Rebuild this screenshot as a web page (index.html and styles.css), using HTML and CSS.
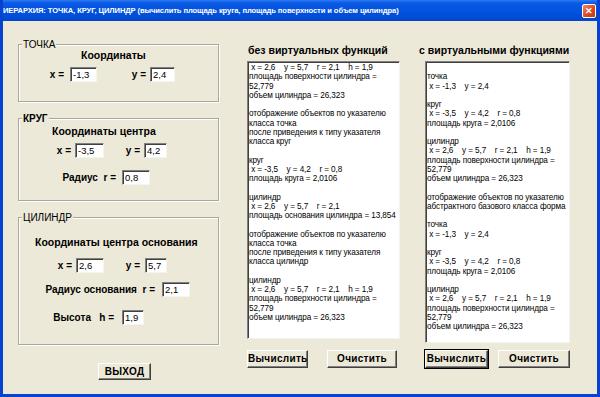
FILE: index.html
```html
<!DOCTYPE html>
<html lang="ru">
<head>
    <meta charset="UTF-8">
    <title>Иерархия</title>
    <link rel="stylesheet" href="styles.css">
</head>
<body>
    <div class="window">
        <div class="titlebar">
            <span class="title">ИЕРАРХИЯ: ТОЧКА, КРУГ, ЦИЛИНДР (вычислить площадь круга, площадь поверхности и объем цилиндра)</span>
            <span class="close">&#x2715;</span>
        </div>

        <div class="client">
            <div class="left">
                <div class="group g-point">
                    <div class="caption">ТОЧКА</div>
                    <div class="subhead sh-point">Координаты</div>
                    <div class="row r-point">
                        <span class="lbl l1">x =</span><span class="field f1">-1,3</span>
                        <span class="lbl l2">y =</span><span class="field f2">2,4</span>
                    </div>
                </div>

                <div class="group g-circle">
                    <div class="caption">КРУГ</div>
                    <div class="subhead sh-circle">Координаты центра</div>
                    <div class="row r-circle">
                        <span class="lbl l1">x =</span><span class="field f1">-3,5</span>
                        <span class="lbl l2">y =</span><span class="field f2">4,2</span>
                    </div>
                    <div class="row r-radius">
                        <span class="lbl l1">Радиус&nbsp; r =</span><span class="field f1">0,8</span>
                    </div>
                </div>

                <div class="group g-cyl">
                    <div class="caption">ЦИЛИНДР</div>
                    <div class="subhead sh-cyl">Координаты центра основания</div>
                    <div class="row r-cyl">
                        <span class="lbl l1">x =</span><span class="field f1">2,6</span>
                        <span class="lbl l2">y =</span><span class="field f2">5,7</span>
                    </div>
                    <div class="row r-base">
                        <span class="lbl l1">Радиус основания&nbsp; r =</span><span class="field f1">2,1</span>
                    </div>
                    <div class="row r-height">
                        <span class="lbl l1">Высота&nbsp;&nbsp; h =</span><span class="field f1">1,9</span>
                    </div>
                </div>

                <button class="btn exit">ВЫХОД</button>
            </div>

            <div class="col col-plain">
                <div class="heading">без виртуальных функций</div>
                <div class="memo">
                    <div> x = 2,6    y = 5,7    r = 2,1    h = 1,9</div>
                    <div>площадь поверхности цилиндра =</div>
                    <div>52,779</div>
                    <div>объем цилиндра = 26,323</div>
                    <div> </div>
                    <div>отображение объектов по указателю</div>
                    <div>класса точка</div>
                    <div>после приведения к типу указателя</div>
                    <div>класса круг</div>
                    <div> </div>
                    <div>круг</div>
                    <div> x = -3,5    y = 4,2    r = 0,8</div>
                    <div>площадь круга = 2,0106</div>
                    <div> </div>
                    <div>цилиндр</div>
                    <div> x = 2,6    y = 5,7    r = 2,1</div>
                    <div>площадь основания цилиндра = 13,854</div>
                    <div> </div>
                    <div>отображение объектов по указателю</div>
                    <div>класса точка</div>
                    <div>после приведения к типу указателя</div>
                    <div>класса цилиндр</div>
                    <div> </div>
                    <div>цилиндр</div>
                    <div> x = 2,6    y = 5,7    r = 2,1    h = 1,9</div>
                    <div>площадь поверхности цилиндра =</div>
                    <div>52,779</div>
                    <div>объем цилиндра = 26,323</div>
                </div>
                <div class="buttons">
                    <button class="btn calc">Вычислить</button>
                    <button class="btn clear">Очистить</button>
                </div>
            </div>

            <div class="col col-virtual">
                <div class="heading">с виртуальными функциями</div>
                <div class="memo">
                    <div> </div>
                    <div>точка</div>
                    <div> x = -1,3    y = 2,4</div>
                    <div> </div>
                    <div>круг</div>
                    <div> x = -3,5    y = 4,2    r = 0,8</div>
                    <div>площадь круга = 2,0106</div>
                    <div> </div>
                    <div>цилиндр</div>
                    <div> x = 2,6    y = 5,7    r = 2,1    h = 1,9</div>
                    <div>площадь поверхности цилиндра =</div>
                    <div>52,779</div>
                    <div>объем цилиндра = 26,323</div>
                    <div> </div>
                    <div>отображение объектов по указателю</div>
                    <div>абстрактного базового класса форма</div>
                    <div> </div>
                    <div>точка</div>
                    <div> x = -1,3    y = 2,4</div>
                    <div> </div>
                    <div>круг</div>
                    <div> x = -3,5    y = 4,2    r = 0,8</div>
                    <div>площадь круга = 2,0106</div>
                    <div> </div>
                    <div>цилиндр</div>
                    <div> x = 2,6    y = 5,7    r = 2,1    h = 1,9</div>
                    <div>площадь поверхности цилиндра =</div>
                    <div>52,779</div>
                    <div>объем цилиндра = 26,323</div>
                </div>
                <div class="buttons">
                    <button class="btn calc default">Вычислить</button>
                    <button class="btn clear">Очистить</button>
                </div>
            </div>
        </div>
    </div>
</body>
</html>
```

FILE: styles.css
```css
body {
    margin: 0;
    padding: 0;
    font-family: "Liberation Sans", Arial, sans-serif;
    background: #ece9d8;
}
.window {
    width: 600px;
    height: 397px;
    box-sizing: border-box;
    border: 3px solid #0843d0;
    border-top: none;
    background: #ece9d8;
    overflow: hidden;
}
.titlebar {
    display: flex;
    align-items: center;
    height: 21px;
    margin: 0 -3px;
    padding: 0 4px 0 3px;
    background: linear-gradient(#2f7bf2 0, #0a5ae6 3px, #0050dc 14px, #0046cc 21px);
    color: #fff;
}
.title {
    font-size: 7.6px;
    font-weight: bold;
    letter-spacing: -0.1px;
    white-space: nowrap;
}
.close {
    margin-left: auto;
    width: 14px;
    height: 14px;
    box-sizing: border-box;
    border: 1px solid #fff;
    border-radius: 2px;
    background: linear-gradient(135deg, #f08a6a, #d8461e 60%, #c23a14);
    color: #fff;
    font-size: 9px;
    font-weight: bold;
    line-height: 12px;
    text-align: center;
}
.client {
    display: flex;
    padding: 23px 0 0 15px;
}

/* left column */
.left {
    width: 201px;
}
.group {
    border: 1px solid #aca899;
    box-shadow: 1px 1px 0 #fff, inset 1px 1px 0 #fff;
}
.g-point { height: 56px; }
.g-circle { height: 81px; margin-top: 16px; }
.g-cyl { height: 126px; margin-top: 16px; }
.caption {
    display: table;
    margin: -7px 0 -6px 3px;
    padding: 0 1px;
    background: #ece9d8;
    font-size: 10px;
    line-height: 13px;
    color: #000;
}
.g-circle .caption { font-weight: bold; }
.subhead {
    font-size: 10.5px;
    font-weight: bold;
    line-height: 12px;
    white-space: nowrap;
}
.sh-point { margin-top: 4px; padding-left: 62px; }
.sh-circle { margin-top: 6px; padding-left: 33px; }
.sh-cyl { margin-top: 18px; padding-left: 16px; }
.row {
    display: flex;
    align-items: center;
    height: 15px;
}
.lbl {
    box-sizing: border-box;
    text-align: right;
    font-size: 10px;
    font-weight: bold;
    white-space: nowrap;
}
.field {
    box-sizing: border-box;
    height: 15px;
    padding-left: 2px;
    background: #fff;
    border: 1px solid;
    border-color: #808080 #f4f4f0 #f4f4f0 #808080;
    box-shadow: inset 1px 1px 0 #404040;
    font-size: 9.5px;
    line-height: 13px;
}
.r-point { margin-top: 6px; }
.r-point .l1 { width: 51px; padding-right: 6px; }
.r-point .f1 { width: 27px; }
.r-point .l2 { width: 53px; padding-right: 4px; }
.r-point .f2 { width: 25px; }
.r-circle { margin-top: 6px; }
.r-circle .l1 { width: 56px; padding-right: 4px; }
.r-circle .f1 { width: 29px; }
.r-circle .l2 { width: 40px; padding-right: 4px; }
.r-circle .f2 { width: 23px; }
.r-radius { margin-top: 12px; }
.r-radius .l1 { width: 103px; padding-right: 6px; }
.r-radius .f1 { width: 28px; }
.r-cyl { margin-top: 10px; }
.r-cyl .l1 { width: 57px; padding-right: 4px; }
.r-cyl .f1 { width: 28px; }
.r-cyl .l2 { width: 41px; padding-right: 5px; }
.r-cyl .f2 { width: 22px; }
.r-base { margin-top: 9px; }
.r-base .l1 { width: 143px; padding-right: 7px; }
.r-base .f1 { width: 28px; }
.r-height { margin-top: 13px; }
.r-height .l1 { width: 103px; padding-right: 8px; }
.r-height .f1 { width: 22px; }

/* buttons */
.btn {
    display: block;
    box-sizing: border-box;
    height: 18px;
    padding: 0;
    background: #ece9d8;
    border: 1px solid;
    border-color: #fff #404040 #404040 #fff;
    box-shadow: inset -1px -1px 0 #808080;
    font-family: "Liberation Sans", Arial, sans-serif;
    font-size: 10px;
    font-weight: bold;
    line-height: 14px;
    letter-spacing: 0.3px;
    color: #000;
}
.exit {
    width: 53px;
    height: 17px;
    margin: 18px 0 0 80px;
}
.default {
    outline: 1px solid #000;
}

/* text columns */
.col {
    display: flex;
    flex-direction: column;
}
.col-plain {
    width: 153px;
    margin-left: 28px;
}
.col-virtual {
    width: 145px;
    margin-left: 25px;
}
.heading {
    height: 12px;
    font-size: 10.5px;
    font-weight: bold;
    line-height: 12px;
    white-space: nowrap;
}
.col-plain .heading { margin-left: 1px; }
.col-virtual .heading { margin-left: -6px; }
.memo {
    box-sizing: border-box;
    margin-top: 5px;
    padding: 1px 0 0 1px;
    background: #fff;
    border: 1px solid;
    border-color: #808080 #f4f4f0 #f4f4f0 #808080;
    box-shadow: inset 1px 1px 0 #404040;
    font-size: 8.2px;
    letter-spacing: -0.1px;
    line-height: 9.25px;
    overflow: hidden;
}
.memo div {
    height: 9.25px;
    white-space: pre;
}
.col-plain .memo { height: 278px; }
.col-virtual .memo { height: 282px; }
.buttons {
    display: flex;
}
.col-plain .buttons { margin-top: 11px; gap: 19px; }
.col-virtual .buttons { margin-top: 7px; gap: 10px; }
.col-plain .calc { width: 61px; }
.col-plain .clear { width: 70px; }
.col-virtual .calc { width: 63px; }
.col-virtual .clear { width: 72px; }
```
